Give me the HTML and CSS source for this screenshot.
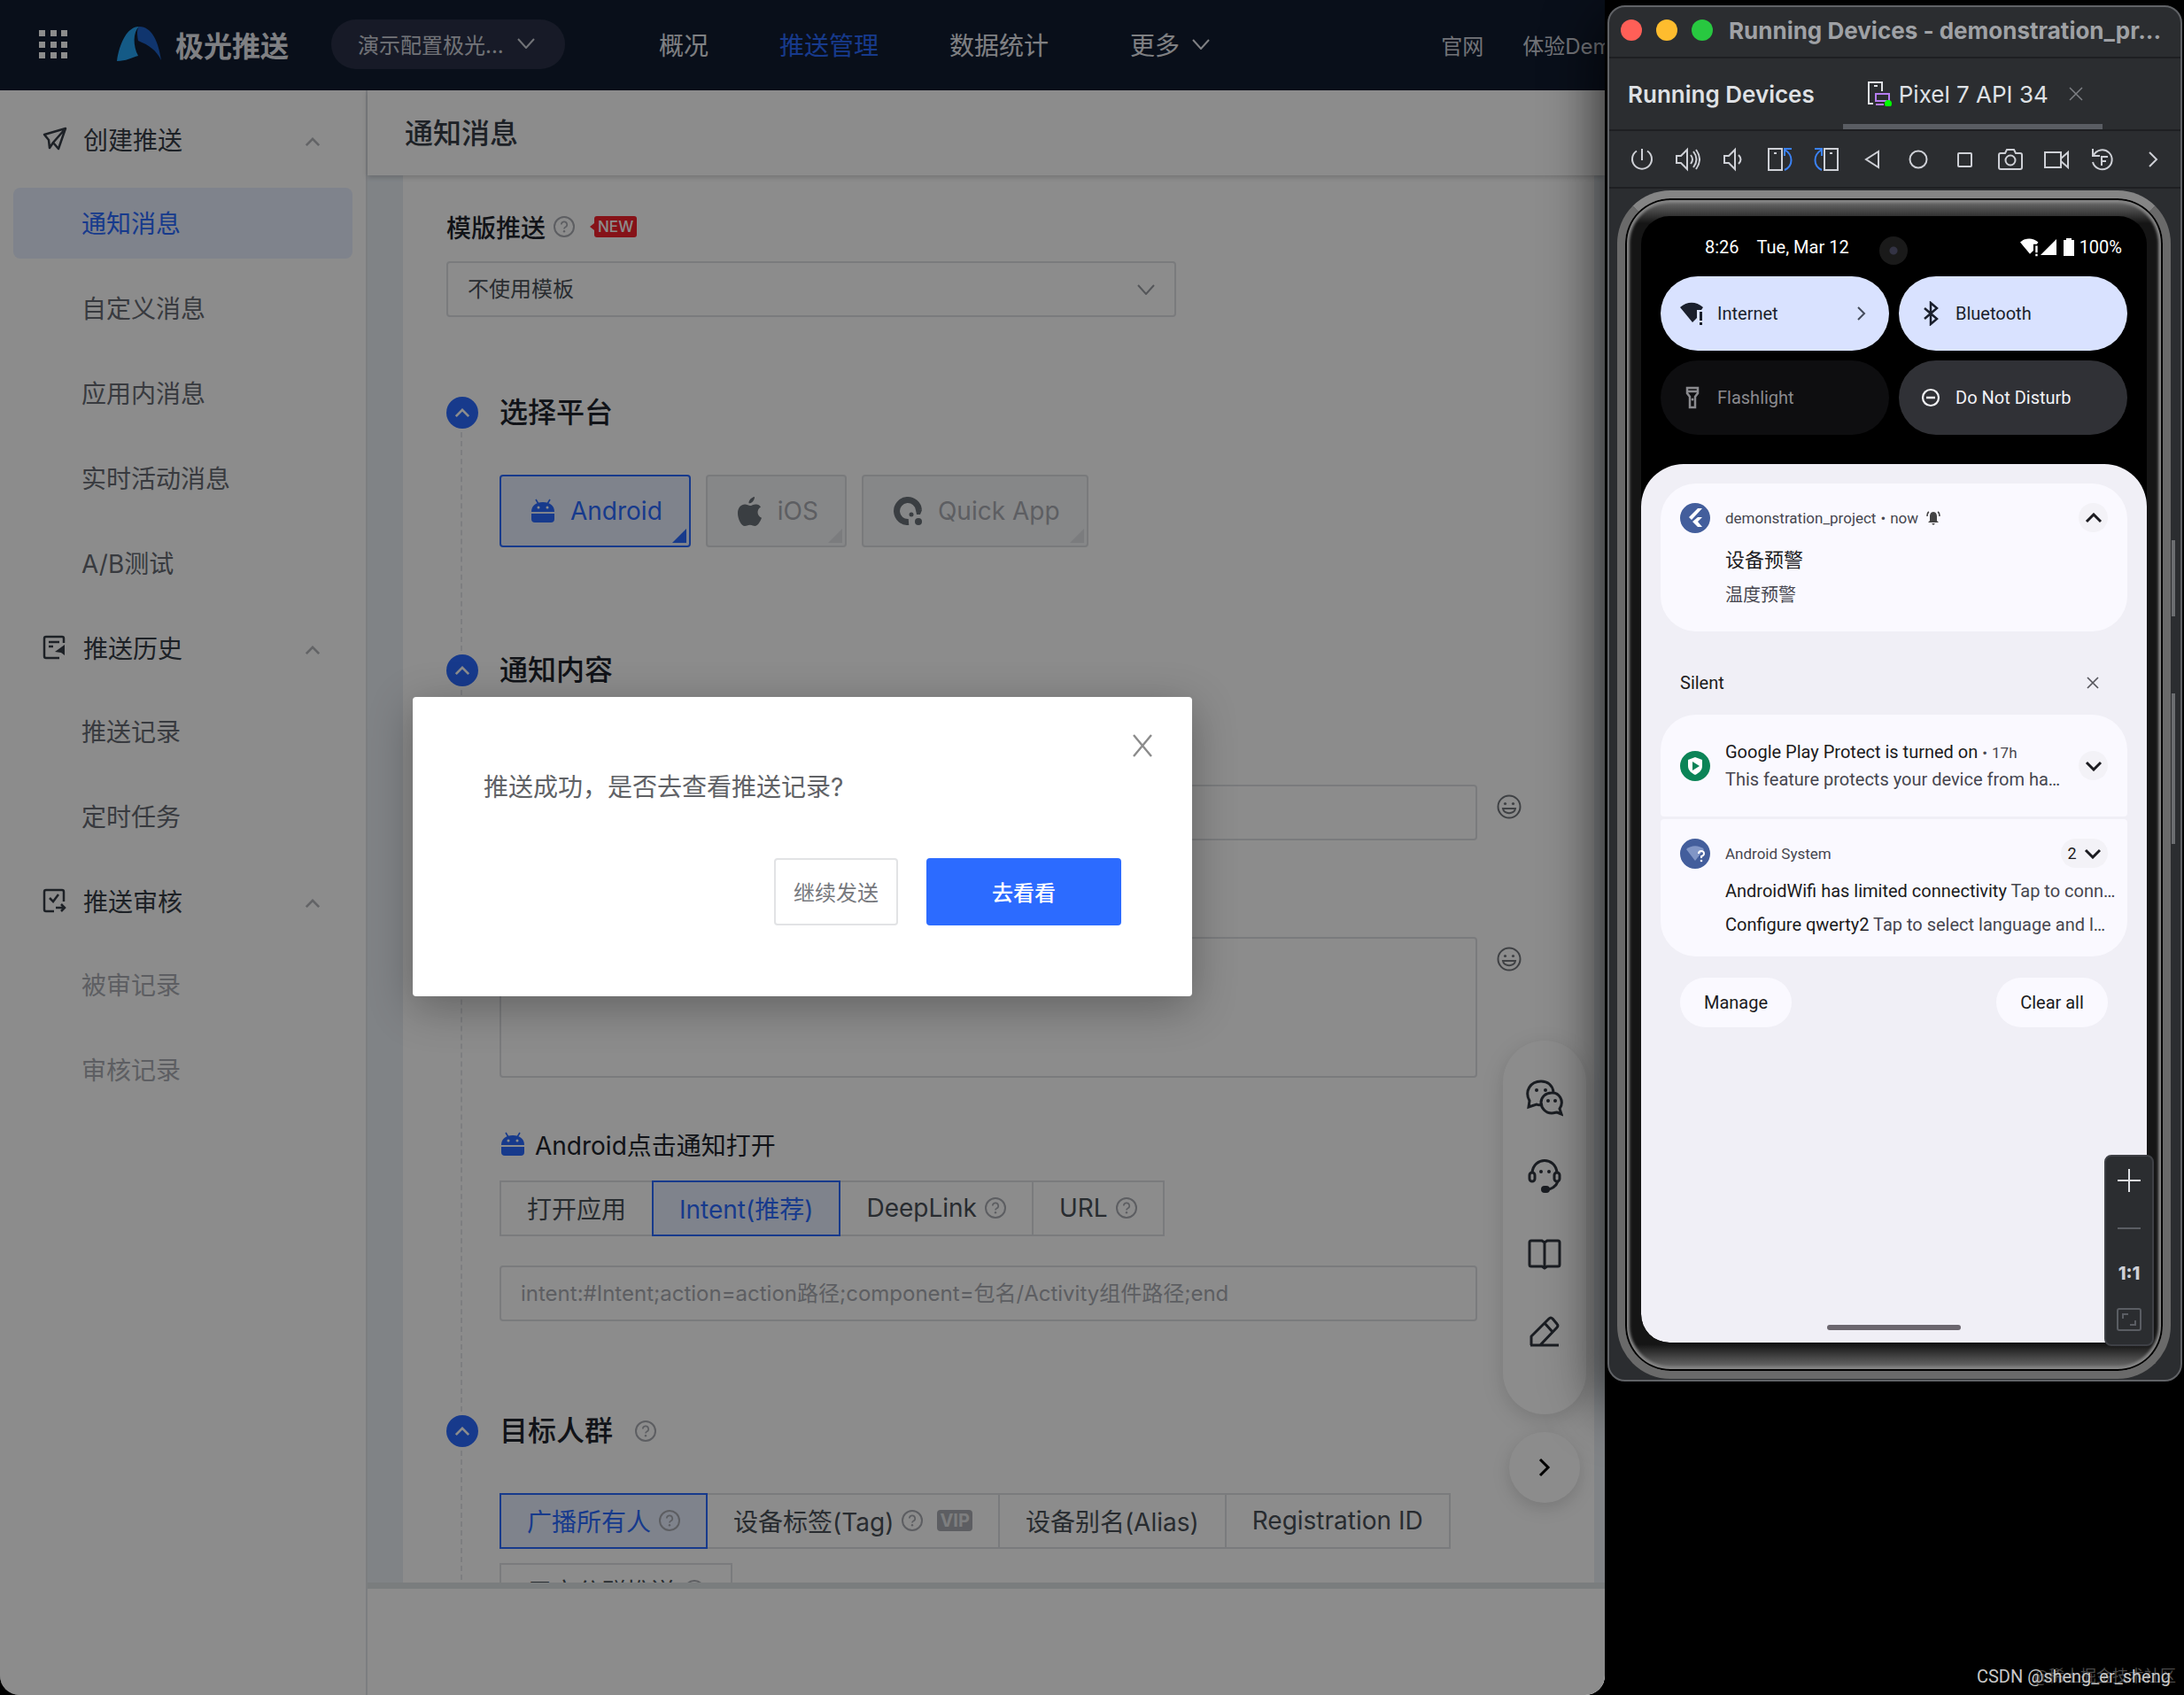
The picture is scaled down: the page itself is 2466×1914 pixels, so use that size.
FILE: index.html
```html
<!DOCTYPE html>
<html lang="zh-CN">
<head>
<meta charset="utf-8">
<title>极光推送</title>
<link rel="stylesheet" href="styles.css">
</head>
<body>
<svg width="0" height="0" class="defs" aria-hidden="true">
  <symbol id="help" viewBox="0 0 24 24"><circle cx="12" cy="12" r="11" fill="none" stroke="currentColor" stroke-width="2"/><path d="M8.8 9.6a3.2 3.2 0 1 1 4.6 2.9c-1 .5-1.4 1-1.4 2" fill="none" stroke="currentColor" stroke-width="1.7"/><circle cx="12" cy="17.3" r="1.2" fill="currentColor"/></symbol>
  <symbol id="up" viewBox="0 0 20 12"><path d="M2 10l8-8 8 8" fill="none" stroke="currentColor" stroke-width="3"/></symbol>
  <symbol id="down" viewBox="0 0 20 12"><path d="M1 1l9 10 9-10" fill="none" stroke="currentColor" stroke-width="2"/></symbol>
  <symbol id="robot" viewBox="0 0 26 28"><path d="M5 1l3 5M21 1l-3 5" stroke="currentColor" stroke-width="1.6"/><path d="M0 15C0 8 5 4 13 4s13 4 13 11z" fill="currentColor"/><path d="M0 17h26v6a4 4 0 0 1-4 4H4a4 4 0 0 1-4-4z" fill="currentColor"/><circle cx="8" cy="10" r="1.5" fill="#fff"/><circle cx="18" cy="10" r="1.5" fill="#fff"/></symbol>
  <symbol id="smile" viewBox="0 0 28 28"><g fill="none" stroke="currentColor" stroke-width="2"><circle cx="14" cy="14" r="12.5"/><path d="M7 16h14c-1 7-13 7-14 0z"/></g><circle cx="9.500" cy="10.500" r="1.600" fill="currentColor"/><circle cx="18.500" cy="10.500" r="1.600" fill="currentColor"/></symbol>
  <symbol id="wifi" viewBox="0 0 28 28"><path d="M0 7c8-7 18-7 26 0l-2 3h-5v9l-5 5z" fill="currentColor"/><path d="M22 12h3v10h-3zM22 24h3v3h-3z" fill="currentColor"/></symbol>
</svg>
<div class="desktop">
  <div class="browser">
    <header class="topbar">
      <svg class="apps" viewBox="0 0 32 32" fill="#fff"><path d="M0 0h7v7H0zM13 0h7v7h-7zM25 0h7v7h-7zM0 13h7v7H0zM13 13h7v7h-7zM25 13h7v7h-7zM0 25h7v7H0zM13 25h7v7h-7zM25 25h7v7h-7z"/></svg>
      <svg class="logo" viewBox="0 0 50 40"><path d="M0 39C3 18 12 0 25 0c-7 6-7 22-1 33-7 2-14 6-24 6z" fill="#26a5f5"/><path d="M25 0c15 0 22 18 25 38-6-12-14-17-26-22-1-6-2-12 1-16z" fill="#1e62c8"/></svg>
      <strong class="brand">极光推送</strong>
      <button class="app-pick">演示配置极光...<svg class="chev"><use href="#down"/></svg></button>
      <nav class="mainnav">
        <a href="#">概况</a><a href="#" class="on">推送管理</a><a href="#">数据统计</a><a href="#" class="more">更多<svg class="chev"><use href="#down"/></svg></a>
      </nav>
      <nav class="sidenav"><a href="#">官网</a><a href="#">体验Demo</a></nav>
    </header>
    <div class="body">
      <aside class="sidebar">
        <button class="group"><svg class="gi" viewBox="0 0 28 28"><path d="M2 9L26 2l-8 23-6-7-4 6-1-9zM12 18L26 2" fill="none" stroke="currentColor" stroke-width="2.500" stroke-linejoin="round"/></svg>创建推送<svg class="caret"><use href="#up"/></svg></button>
        <a href="#" class="item on">通知消息</a>
        <a href="#" class="item">自定义消息</a>
        <a href="#" class="item">应用内消息</a>
        <a href="#" class="item">实时活动消息</a>
        <a href="#" class="item">A/B测试</a>
        <button class="group"><svg class="gi" viewBox="0 0 28 28"><path d="M24 9V4a2 2 0 0 0-2-2H4a2 2 0 0 0-2 2v20a2 2 0 0 0 2 2h15M7 8h12M7 13h5" fill="none" stroke="currentColor" stroke-width="2.500"/><path d="M25 11v12l-4-3-7-1z" fill="currentColor"/></svg>推送历史<svg class="caret"><use href="#up"/></svg></button>
        <a href="#" class="item">推送记录</a>
        <a href="#" class="item">定时任务</a>
        <button class="group"><svg class="gi" viewBox="0 0 28 28"><path d="M24 15V4a2 2 0 0 0-2-2H4a2 2 0 0 0-2 2v20a2 2 0 0 0 2 2h9M8 11l4 4 6-8M15 22h10M21 18l4 4-4 4" fill="none" stroke="currentColor" stroke-width="2.500"/></svg>推送审核<svg class="caret"><use href="#up"/></svg></button>
        <a href="#" class="item off">被审记录</a>
        <a href="#" class="item off">审核记录</a>
      </aside>
      <main class="main">
        <h1 class="title">通知消息</h1>
        <div class="scroll">
          <form class="panel">
            <div class="tpl">
              <div class="label"><label for="tpl">模版推送</label><svg class="help"><use href="#help"/></svg><span class="new">NEW</span></div>
              <div class="select"><select id="tpl"><option>不使用模板</option></select><svg class="chev"><use href="#down"/></svg></div>
            </div>
            <section class="step s1">
              <h2><span class="dot"><svg><use href="#up"/></svg></span>选择平台</h2>
              <div class="platforms">
                <button type="button" class="plat on"><svg class="robot"><use href="#robot"/></svg>Android</button>
                <button type="button" class="plat"><svg class="apple" viewBox="0 0 27 33"><path fill="#6a7178" d="M19 0c.3 3.500-3 7.500-6.500 7.300C12.200 4 15.500.5 19 0zM26 11.500c-5 3-4.500 10 1 12.200C25 29 22 33 19.500 33c-2 0-3-1.300-5.700-1.300S10 33 8 33C4 33 0 25 0 18.500 0 12 4 8.500 8 8.500c2.500 0 4.500 1.600 6 1.600s4-1.900 7-1.600c2 .2 3.800 1 5 3z"/></svg>iOS</button>
                <button type="button" class="plat"><svg class="quick" viewBox="0 0 32 32"><path d="M17 28.500A12.500 12.500 0 1 1 28.500 15" fill="none" stroke="#6a7178" stroke-width="7"/><circle cx="20" cy="20" r="2.500" fill="#6a7178"/><circle cx="28" cy="28" r="4" fill="#6a7178"/><path d="M25 15h7l-2 5h-4z" fill="#6a7178"/></svg>Quick App</button>
              </div>
            </section>
            <section class="step s2">
              <h2><span class="dot"><svg><use href="#up"/></svg></span>通知内容</h2>
              <div class="field f1"><input class="box" aria-label="标题"><svg class="smile"><use href="#smile"/></svg></div>
              <div class="field f2"><textarea class="box" aria-label="内容"></textarea><svg class="smile"><use href="#smile"/></svg></div>
              <div class="sub"><svg class="robot"><use href="#robot"/></svg><label for="intent">Android点击通知打开</label></div>
              <div class="tabs"><button type="button">打开应用</button><button type="button" class="on">Intent(推荐)</button><button type="button">DeepLink<svg class="help"><use href="#help"/></svg></button><button type="button">URL<svg class="help"><use href="#help"/></svg></button></div>
              <div class="field f3"><input class="box" id="intent" placeholder="intent:#Intent;action=action路径;component=包名/Activity组件路径;end"></div>
            </section>
            <section class="step s3">
              <h2><span class="dot"><svg><use href="#up"/></svg></span>目标人群<svg class="help"><use href="#help"/></svg></h2>
              <div class="tabs"><button type="button" class="on">广播所有人<svg class="help"><use href="#help"/></svg></button><button type="button">设备标签(Tag)<svg class="help"><use href="#help"/></svg><span class="vip">VIP</span></button><button type="button">设备别名(Alias)</button><button type="button">Registration ID</button></div>
              <div class="tabs row2"><button type="button">用户分群推送<svg class="help"><use href="#help"/></svg></button></div>
            </section>
          </form>
        </div>
        <footer class="actions"></footer>
      </main>
    </div>
    <div class="floaters">
      <div class="pill">
        <button aria-label="微信"><svg viewBox="0 0 42 42" fill="none" stroke="currentColor" stroke-width="3"><path d="M19 28c-3 1-5 1-7 0l-9 3 1-7C-2 13 5 2 17 2c8 0 13 5 14 12"/><path d="M38 33c6-9-1-19-9-18-7 0-12 5-12 11s5 12 12 12c3 0 5-1 6-1l5 2z"/><g fill="currentColor" stroke="none"><circle cx="12" cy="12" r="2"/><circle cx="22" cy="12" r="2"/><circle cx="25" cy="24" r="2"/><circle cx="33" cy="24" r="2"/></g></svg></button>
        <button aria-label="客服"><svg viewBox="0 0 42 42" fill="none" stroke="currentColor" stroke-width="3"><path d="M7 17C9-1 33-1 35 17M36 27c-2 6-7 9-15 10"/><rect x="4" y="17" width="6" height="10" rx="3"/><rect x="32" y="17" width="6" height="10" rx="3"/><g fill="currentColor" stroke="none"><circle cx="17" cy="16" r="2"/><circle cx="26" cy="16" r="2"/><rect x="17" y="32" width="10" height="8" rx="4"/></g></svg></button>
        <button aria-label="文档"><svg viewBox="0 0 42 42" fill="none" stroke="currentColor" stroke-width="3"><path d="M21 8L18 6H6a2 2 0 0 0-2 2v25a2 2 0 0 0 2 2h12l3 2 3-2h12a2 2 0 0 0 2-2V8a2 2 0 0 0-2-2H24zV37"/></svg></button>
        <button aria-label="反馈"><svg viewBox="0 0 42 42" fill="none" stroke="currentColor" stroke-width="3" stroke-linejoin="round"><path d="M6 36V26L26 6q2-2 4 0l5 6q2 2 0 4L16 36M5 36h32M21 11l9 10"/></svg></button>
      </div>
      <button class="next" aria-label="收起"><svg viewBox="0 0 14 22"><path d="M2 2l9 9-9 9" fill="none" stroke="#000" stroke-width="3"/></svg></button>
    </div>
    <div class="mask"></div>
    <div class="modal" role="dialog" aria-label="推送成功">
      <button class="close" aria-label="关闭"><svg viewBox="0 0 24 26"><path d="M2 1l20 24M22 1L2 25" stroke="#8b8b8b" stroke-width="2.400"/></svg></button>
      <p>推送成功，是否去查看推送记录?</p>
      <div class="btns"><button class="ghost">继续发送</button><button class="primary">去看看</button></div>
    </div>
  </div>

  <div class="device">
    <div class="tbar"><i class="r"></i><i class="y"></i><i class="g"></i><b>Running Devices - demonstration_pr...</b></div>
    <div class="ttabs"><b>Running Devices</b>
      <button class="dtab"><svg class="ph" viewBox="0 0 28 28" fill="none" stroke-width="2"><path d="M6 25H1V1h15v10" stroke="#dfe1e5"/><path d="M7 5h4" stroke="#dfe1e5"/><path d="M9 14h15v8H9zM9 26h9" stroke="#b57cf0"/><circle cx="23" cy="25" r="4" fill="#0f0"/></svg>Pixel 7 API 34<svg class="x" viewBox="0 0 16 16"><path d="M1 1l14 14M15 1L1 15" stroke="#7d7f84" stroke-width="1.500"/></svg></button>
    </div>
    <div class="tools">
      <button aria-label="Power"><svg viewBox="0 0 28 28"><path d="M14 2v13M8 4.500a11 11 0 1 0 12 0"/></svg></button>
      <button aria-label="Volume up"><svg viewBox="0 0 28 28"><path d="M1 10h5l7-7v22l-7-7H1zM17 9q4 5 0 10M20 5q7 9 0 18M23 3q8 11 0 22"/></svg></button>
      <button aria-label="Volume down"><svg viewBox="0 0 28 28"><path d="M3 10h5l7-7v22l-7-7H3zM19 9q5 5 0 10"/></svg></button>
      <button aria-label="Rotate left"><svg viewBox="0 0 28 28"><path d="M1 2h15v24H1zM7 7h3"/><path class="bl" d="M19 26c10-5 10-17 0-23M19 10V2h8"/></svg></button>
      <button aria-label="Rotate right"><svg viewBox="0 0 28 28"><path d="M12 2h15v24H12zM18 7h3"/><path class="bl" d="M9 26C-1 21-1 9 9 3M9 10V2H1"/></svg></button>
      <button aria-label="Back"><svg viewBox="0 0 28 28"><path d="M21 5v18L7 14z"/></svg></button>
      <button aria-label="Home"><svg viewBox="0 0 28 28"><circle cx="14" cy="14" r="9.500"/></svg></button>
      <button aria-label="Overview"><svg viewBox="0 0 28 28"><rect x="7" y="7" width="15" height="15" rx="1"/></svg></button>
      <button aria-label="Screenshot"><svg viewBox="0 0 28 28"><path d="M3 7h5l2-4h8l2 4h5a2 2 0 0 1 2 2v14a2 2 0 0 1-2 2H3a2 2 0 0 1-2-2V9a2 2 0 0 1 2-2z"/><circle cx="14" cy="15" r="5.500"/></svg></button>
      <button aria-label="Record"><svg viewBox="0 0 28 28"><path d="M1 6h18v17H1zM19 13l8-7v17l-8-7"/></svg></button>
      <button aria-label="Reset"><svg viewBox="0 0 28 28"><path d="M4 9a11 11 0 1 1-1 8M3 2v8h8M13 21V11h7M13 16h5"/></svg></button>
      <button aria-label="More" class="last"><svg viewBox="0 0 28 28"><path d="M10 6l8 8-8 8"/></svg></button>
    </div>
    <div class="stage">
      <div class="phone">
        <div class="screen">
          <div class="status"><span>8:26</span><span>Tue, Mar 12</span><i class="cam"></i><span class="sys"><svg class="w" viewBox="0 0 24 24"><use href="#wifi"/></svg><svg class="sg" viewBox="0 0 18 18"><path d="M18 0v18H0z" fill="#fff"/></svg><svg class="bt" viewBox="0 0 12 20"><path d="M3 0h6v2h3v18H0V2h3z" fill="#fff"/></svg>100%</span></div>
          <div class="tiles">
            <button class="tile lit"><svg viewBox="0 0 28 28"><use href="#wifi"/></svg>Internet<svg class="go" viewBox="0 0 10 16"><path d="M1 1l7 7-7 7" fill="none" stroke="#444b5c" stroke-width="2"/></svg></button>
            <button class="tile lit"><svg viewBox="0 0 28 28"><path d="M7 8l14 12-7 6V2l7 6L7 20" fill="none" stroke="currentColor" stroke-width="2.500"/></svg>Bluetooth</button>
            <button class="tile dim"><svg viewBox="0 0 28 28"><path d="M8 3h12v6l-3 4v12h-6V13L8 9zM8 7h12" fill="none" stroke="currentColor" stroke-width="2.500"/><circle cx="14" cy="16" r="1.500" fill="currentColor"/></svg>Flashlight</button>
            <button class="tile mid"><svg viewBox="0 0 28 28"><circle cx="14" cy="14" r="9" fill="none" stroke="currentColor" stroke-width="2.200"/><path d="M9 14h10" stroke="currentColor" stroke-width="2.500"/></svg>Do Not Disturb</button>
          </div>
          <div class="shade">
            <article class="card c1">
              <svg class="ic" viewBox="0 0 34 34"><circle cx="17" cy="17" r="17" fill="#435e9c"/><path d="M20 6h5L13 19l-3-3zM20 16h5l-5 5 5 6h-5l-6-6z" fill="#fff"/></svg>
              <div class="tx"><div class="meta">demonstration_project<span class="dotsep">•</span>now<svg class="bell" viewBox="0 0 16 18"><path d="M8 2c3 0 4 3 4 5v5l2 2H2l2-2V7c0-2 1-5 4-5zM6 15h4l-2 2z" fill="#444"/><path d="M1 7q0-4 2-5M15 7q0-4-2-5" fill="none" stroke="#444" stroke-width="1.500"/></svg></div><div class="t1">设备预警</div><div class="t2">温度预警</div></div>
              <button class="exp" aria-label="Collapse"><svg><use href="#up"/></svg></button>
            </article>
            <div class="silent">Silent<button aria-label="Clear silent"><svg viewBox="0 0 14 14"><path d="M1 1l12 12M13 1L1 13" stroke="#56565c" stroke-width="1.700"/></svg></button></div>
            <article class="card c2">
              <svg class="ic" viewBox="0 0 34 34"><circle cx="17" cy="17" r="17" fill="#0b8457"/><path d="M17 7l8 3v7c0 5-4 8-8 10-4-2-8-5-8-10v-7z" fill="#fff"/><path d="M14 12l8 5-8 5z" fill="#0b8457"/></svg>
              <div class="tx"><div class="ln">Google Play Protect is turned on<small class="dotsep">•</small><small>17h</small></div><div class="ln soft">This feature protects your device from ha…</div></div>
              <button class="exp" aria-label="Expand"><svg class="flip"><use href="#up"/></svg></button>
            </article>
            <article class="card c3">
              <svg class="ic" viewBox="0 0 34 34"><circle cx="17" cy="17" r="17" fill="#435e9c"/><path d="M7 12c6-5 14-5 20 0L17 25z" fill="#8196c6"/><path d="M21 17q0-3 3-3t3 3q0 2-3 3v2" fill="none" stroke="#fff" stroke-width="2"/><circle cx="24" cy="25" r="1.300" fill="#fff"/></svg>
              <div class="tx"><div class="meta">Android System</div><div class="ln a">AndroidWifi has limited connectivity <span>Tap to conn…</span></div><div class="ln b">Configure qwerty2 <span>Tap to select language and l…</span></div></div>
              <button class="exp wide" aria-label="Expand 2">2<svg class="flip"><use href="#up"/></svg></button>
            </article>
            <div class="foot"><button>Manage</button><button>Clear all</button></div>
            <i class="home"></i>
          </div>
        </div>
      </div>
      <i class="key k1"></i><i class="key k2"></i>
      <div class="zoom"><button aria-label="Zoom in"><svg viewBox="0 0 28 28"><path d="M14 1v26M1 14h26" stroke="#dfe1e5" stroke-width="2"/></svg></button><button aria-label="Zoom out"><svg viewBox="0 0 28 28"><path d="M1 14h26" stroke="#5a5d63" stroke-width="2"/></svg></button><button>1:1</button><button aria-label="Fit"><svg viewBox="0 0 28 28"><path d="M3 2h22a2 2 0 0 1 2 2v20a2 2 0 0 1-2 2H3a2 2 0 0 1-2-2V4a2 2 0 0 1 2-2zM7 13V8h6M21 15v5h-6" fill="none" stroke="#5a5d63" stroke-width="2"/></svg></button></div>
    </div>
  </div>
  <div class="wm"><span class="wm2">@稀土掘金技术社区</span><span class="wm1">CSDN @sheng_er_sheng</span></div>
</div>
</body>
</html>
```
FILE: styles.css
```css
*{box-sizing:border-box}
body{margin:0;background:#000;font-family:Inter,"Noto Sans CJK SC",sans-serif;font-size:28px;color:#4a5058}
button,input,textarea,select{font:inherit;color:inherit;background:none;border:0;padding:0;margin:0;border-radius:0}
a{color:inherit;text-decoration:none}
svg{display:block;flex:none}
.defs{position:absolute}
.desktop{position:relative;display:flex;align-items:flex-start;gap:3px;min-height:100vh;overflow:hidden}

/* console */
.browser{position:relative;flex:1;min-width:0;height:100vh;display:flex;flex-direction:column;background:#fff;border-radius:0 0 22px 22px;overflow:hidden}
.topbar{height:102px;flex:none;display:flex;align-items:center;background:#121d31;color:#e8eaef;padding:0 0 2px 44px;white-space:nowrap;overflow:hidden}
.apps{width:32px;height:32px}
.logo{width:50px;height:40px;margin-left:56px}
.brand{font-size:32px;margin-left:16px}
.app-pick{height:56px;width:264px;margin-left:48px;border-radius:28px;background:#2a3147;padding:0 34px 2px 30px;font-size:24px;display:flex;align-items:center;justify-content:space-between;color:#cfd2da;flex:none}
.chev{width:20px;height:12px}
.mainnav{display:flex;gap:80px;margin-left:106px}
.mainnav .on{color:#2b6bff}
.more{display:flex;align-items:center;gap:14px;margin-left:12px}
.sidenav{display:flex;gap:44px;margin-left:auto;margin-right:-22px;font-size:24px;color:#cfd2da}
.body{flex:1;min-height:0;display:flex}
.sidebar{width:415px;flex:none;border-right:2px solid #e2e5ea;padding:16px 15px}
.group{display:flex;align-items:center;width:100%;height:80px;margin-bottom:14px;padding:0 36px 2px 33px;color:#363c46}
.gi{width:28px;height:28px;margin-right:18px}
.caret{width:18px;height:11px;margin-left:auto;margin-top:6px;color:#b4b6bb}
.item{display:flex;align-items:center;height:80px;margin-bottom:16px;padding:0 0 2px 77px;border-radius:8px;color:#666b73}
.item.on{background:#e7eeff;color:#2b6bff}
.item.off{color:#a9acb2}
.main{flex:1;min-width:0;display:flex;flex-direction:column}
.title{margin:0;height:96px;flex:none;display:flex;align-items:center;padding:0 0 4px 42px;font-size:32px;font-weight:500;color:#363c46;box-shadow:0 2px 6px rgba(0,0,0,.2);position:relative}
.scroll{flex:1;min-height:0;overflow:hidden;background:#e9eff5;padding:0 12px 0 40px}
.panel{background:#fff;height:100%;padding:36px 132px 0 49px}
.label{display:flex;align-items:center;height:44px;font-weight:500;color:#20242c}
.help{width:24px;height:24px;color:#a9acb2;margin-left:9px}
.new{position:relative;background:#f5222d;color:#fff;font-size:17px;line-height:24px;padding:0 4px;margin-left:22px;border-radius:3px}
.new::before{content:"";position:absolute;left:-5px;top:8px;border:4px solid transparent;border-left:0;border-right:5px solid #f5222d}
.select{position:relative;width:824px;max-width:100%;height:63px;margin-top:17px;border:2px solid #dee0e3;border-radius:4px;display:flex;align-items:center;padding-right:22px;color:#9a9da3}
.select select{appearance:none;flex:1;height:100%;padding-left:22px;font-size:24px;color:#4a5058}
.step{position:relative;padding-left:60px}
.step::before{content:"";position:absolute;left:16px;top:44px;bottom:0;border-left:2px dashed #e3e5e9}
.step h2{position:relative;margin:0;height:44px;display:flex;align-items:center;font-size:32px;font-weight:500;color:#20242c;line-height:44px}
.step h2 .help{margin-left:25px}
.dot{width:36px;height:36px;margin-left:-60px;margin-right:24px;border-radius:50%;background:#2b6bff;color:#fff;display:grid;place-items:center}
.dot svg{width:18px;height:11px}
.s1{margin-top:86px;height:291px}
.s2{height:859px}
.s3{height:200px}
.platforms{display:flex;gap:17px;margin-top:48px}
.plat{position:relative;height:82px;padding:0 30px 0 34px;display:flex;align-items:center;gap:18px;border:2px solid #dcdee2;background:#f5f6f7;border-radius:4px;color:#a9acb2}
.plat::after{content:"";position:absolute;right:3px;bottom:3px;border:8px solid #e0e2e6;border-top-color:transparent;border-left-color:transparent}
.plat.on{border-color:#2b6bff;background:#e7eeff;color:#2b6bff}
.plat.on::after{border-right-color:#2b6bff;border-bottom-color:#2b6bff}
.robot{width:26px;height:28px;color:#2b6bff}
.apple{width:27px;height:33px}
.quick{width:32px;height:32px}
.field{display:flex;align-items:flex-start;gap:22px;margin-right:-50px}
.box{flex:1;min-width:0;height:63px;border:2px solid #dee0e3;border-radius:4px;padding:0 22px;font-size:24px;resize:none}
.box::placeholder{color:#a9acb2;opacity:1}
.smile{width:28px;height:28px;margin-top:11px;color:#73777d}
.f1{margin-top:107px}
.f2{margin-top:109px}
.f2 .box{height:159px}
.f3{margin-top:33px;margin-right:0}
.sub{display:flex;align-items:center;gap:12px;height:44px;margin-top:53px;padding-left:2px;color:#20242c}
.tabs{display:flex;margin-top:19px}
.tabs button{height:63px;border:2px solid #dee0e3;margin-right:-2px;padding:0 29px 2px;display:flex;align-items:center;white-space:nowrap}
.tabs button.on{position:relative;border-color:#2b6bff;background:#e7eeff;color:#2b6bff}
.vip{background:#a9acb2;color:#e4e5e7;font-size:20px;font-weight:700;line-height:24px;padding:0 3px;border-radius:4px;margin-left:16px}
.s3 .tabs{margin-top:48px}
.s3 .row2{margin-top:16px}
.actions{height:127px;flex:none;background:#fff;border-top:7px solid #dfe3e6}
.floaters{position:absolute;right:21px;bottom:217px;width:94px;display:flex;flex-direction:column;align-items:center;gap:20px}
.pill{width:94px;height:422px;border-radius:47px;background:#fff;box-shadow:0 6px 24px rgba(0,0,0,.15);padding-top:44px;display:flex;flex-direction:column;align-items:center;gap:46px;color:#31363e}
.pill svg{width:42px;height:42px}
.next{width:80px;height:80px;border-radius:50%;background:#fff;box-shadow:0 6px 20px rgba(0,0,0,.15);display:grid;place-items:center}
.next svg{width:14px;height:22px}
.mask{position:absolute;inset:0;background:rgba(0,0,0,.45)}
.modal{position:absolute;left:50%;top:787px;width:880px;height:338px;margin-left:-440px;background:#fff;border-radius:4px;padding:80px;box-shadow:0 12px 50px rgba(0,0,0,.3);color:#606266}
.modal p{margin:0;line-height:44px}
.close{position:absolute;right:44px;top:42px}
.close svg{width:24px;height:26px}
.btns{display:flex;justify-content:flex-end;gap:32px;margin-top:58px;font-size:24px}
.btns button{height:76px;border-radius:4px;padding-bottom:2px}
.ghost{width:140px;border:2px solid #e2e3e5;color:#76787d}
.primary{width:220px;background:#2c6bff;color:#fff;font-weight:500}

/* running devices */
.device{position:relative;width:649px;flex:none;margin:6px 2px 0 0;background:#2b2d30;border:2px solid #606266;border-radius:20px;box-shadow:0 20px 60px 10px rgba(0,0,0,.65);font-family:Inter,sans-serif;color:#dfe1e5}
.tbar{height:58px;display:flex;align-items:center;gap:16px;padding:0 0 4px 13px;border-bottom:2px solid #1e1f22;font-size:26px;color:#9fa1a5;white-space:nowrap}
.tbar i{width:24px;height:24px;border-radius:50%}
.r{background:#ff5f57}.y{background:#febc2e}.g{background:#28c840}
.tbar b{margin-left:2px;font-weight:700}
.ttabs{height:82px;display:flex;border-bottom:2px solid #1e1f22;font-size:26px;padding-left:21px;align-items:center}
.ttabs b{font-weight:600}
.dtab{align-self:stretch;margin-left:32px;width:293px;padding:6px 22px 0 28px;display:flex;align-items:center;border-bottom:6px solid #5a5d63}
.ph{width:28px;height:28px;margin-right:7px}
.x{width:16px;height:16px;margin-left:auto}
.tools{height:65px;display:flex;align-items:center;padding-left:23px;gap:24px;border-bottom:2px solid #1e1f22}
.tools svg{width:28px;height:28px;fill:none;stroke:#ced0d6;stroke-width:2}
.tools .bl{stroke:#3b82f6}
.last{margin-left:5px}
.stage{position:relative;padding:2px 11px 1px 9px}
.phone{border-radius:60px;background:linear-gradient(#777,#151515 28px,#151515 calc(100% - 30px),#777);border:9px solid #6a6a6a;border-top-color:#858585;box-shadow:inset 0 0 0 2px #000,inset 0 0 3px 5px #858585;padding:20px 18px 32px 18px}
.screen{background:#000;border-radius:32px;overflow:hidden;font-family:Roboto,"Noto Sans CJK SC",sans-serif;font-size:20px}
.status{height:68px;display:flex;align-items:center;padding:2px 28px 0 72px;gap:20px;color:#fff}
.cam{width:32px;height:32px;border-radius:50%;background:radial-gradient(#334 4px,#1a1a1a 5px);margin:8px 0 0 14px}
.sys{margin-left:auto;display:flex;align-items:center}
.w{width:24px;height:22px}.sg{width:18px;height:18px}
.bt{width:12px;height:20px;margin:0 6px 0 8px}
.tiles{display:grid;grid-template-columns:1fr 1fr;gap:11px;padding:0 22px}
.tile{height:84px;border-radius:42px;display:flex;align-items:center;padding:0 26px 0 22px;gap:14px}
.tile svg{width:28px;height:28px}
.tile .go{width:10px;height:16px;margin-left:auto}
.lit{background:#d9e2ff;color:#1a1f2c}.dim{background:#0e0e10;color:#8a8a8e}.mid{background:#303136;color:#f2f2f6}
.shade{margin-top:33px;height:992px;background:#f0eff6;border-radius:48px 48px 32px 32px;padding:22px;color:#1b1b20;display:flex;flex-direction:column}
.card{background:#faf9ff;display:flex;padding:0 22px;gap:17px}
.ic{width:34px;height:34px}
.tx{flex:1;min-width:0;white-space:nowrap}
.meta{display:flex;align-items:center;height:34px;font-size:17px;color:#46464f}
.dotsep{margin:0 5px}
.bell{width:16px;height:18px;margin-left:9px}
.exp{width:33px;height:33px;border-radius:17px;background:#f3f2f7;display:flex;align-items:center;justify-content:center;gap:8px;flex:none}
.exp svg{width:20px;height:12px}
.flip{transform:rotate(180deg)}
.c1{height:167px;border-radius:40px;padding-top:22px}
.t1{font-size:22px;line-height:40px;margin-top:11px}
.t2{font-size:20px;line-height:38px;color:#46464f}
.silent{height:94px;display:flex;align-items:center;justify-content:space-between;padding:22px 32px 0 22px}
.silent svg{width:14px;height:14px}
.c2{height:115px;border-radius:40px 40px 4px 4px;padding-top:27px}
.c2 .ic,.c2 .exp{margin-top:14px}
.ln{line-height:30px}
.ln small{font-size:17px;color:#46464f}
.soft,.ln span{color:#46464f}
.c3{height:155px;margin-top:3px;border-radius:4px 4px 40px 40px;padding-top:22px;position:relative}
.a{margin-top:10px}.b{margin-top:8px}
.wide{position:absolute;right:22px;width:53px;font-size:18px}
.foot{display:flex;justify-content:space-between;padding:24px 22px 0}
.foot button{width:126px;height:56px;border-radius:28px;background:#faf9ff}
.home{width:151px;height:6px;border-radius:3px;background:#6b666e;margin:auto auto -8px}
.key{position:absolute;right:6px;width:4px;background:#6b6d70}
.k1{top:397px;height:86px}.k2{top:570px;height:170px}
.zoom{position:absolute;right:30px;bottom:38px;width:56px;height:216px;background:#2b2d30;border:2px solid #3e4045;border-radius:8px;display:flex;flex-direction:column;align-items:center;justify-content:space-between;padding:13px 0 14px;font-size:20px;font-weight:800;color:#ced0d6}
.zoom svg{width:28px;height:28px}
.wm{position:absolute;right:9px;bottom:8px;display:grid;font-size:20px;justify-items:end;align-items:center;line-height:26px;font-family:Roboto,"Noto Sans CJK SC",sans-serif}
.wm span{grid-area:1/1}
.wm1{color:#c8c8c8;margin-right:6px}
.wm2{color:#4a4a4a;font-size:18px}
```
